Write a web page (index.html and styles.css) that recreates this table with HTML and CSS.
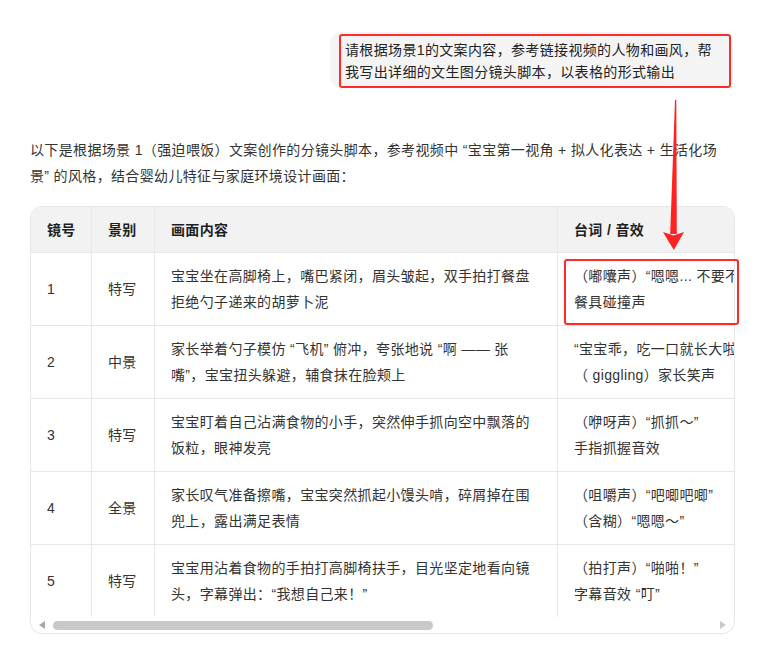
FILE: index.html
```html
<!DOCTYPE html>
<html>

<head>
    <meta charset="UTF-8">
    <meta name="viewport" content="width=device-width, initial-scale=1.0">
    <title>分镜头脚本</title>
    <link rel="stylesheet" href="styles.css">
</head>

<body>
    <div class="chat">
        <div class="question">
            <div class="question-bubble">
                <div class="question-text">请根据场景1的文案内容，参考链接视频的人物和画风，帮我写出详细的文生图分镜头脚本，以表格的形式输出</div>
            </div>
        </div>
        <div class="answer">
            <p class="intro">以下是根据场景 1（强迫喂饭）文案创作的分镜头脚本，参考视频中 “宝宝第一视角 + 拟人化表达 + 生活化场景” 的风格，结合婴幼儿特征与家庭环境设计画面：</p>
            <div class="table-box">
                <div class="table-scroll">
                    <table class="script-table">
                        <thead>
                            <tr>
                                <th class="col-no">镜号</th>
                                <th class="col-shot">景别</th>
                                <th class="col-scene">画面内容</th>
                                <th class="col-sound">台词 / 音效</th>
                            </tr>
                        </thead>
                        <tbody>
                            <tr>
                                <td>1</td>
                                <td>特写</td>
                                <td>宝宝坐在高脚椅上，嘴巴紧闭，眉头皱起，双手拍打餐盘拒绝勺子递来的胡萝卜泥</td>
                                <td>（嘟囔声）“嗯嗯... 不要不要！”<br>餐具碰撞声</td>
                            </tr>
                            <tr>
                                <td>2</td>
                                <td>中景</td>
                                <td>家长举着勺子模仿 “飞机” 俯冲，夸张地说 “啊 —— 张嘴”，宝宝扭头躲避，辅食抹在脸颊上</td>
                                <td>“宝宝乖，吃一口就长大啦～”<br>（ giggling）家长笑声</td>
                            </tr>
                            <tr>
                                <td>3</td>
                                <td>特写</td>
                                <td>宝宝盯着自己沾满食物的小手，突然伸手抓向空中飘落的饭粒，眼神发亮</td>
                                <td>（咿呀声）“抓抓～”<br>手指抓握音效</td>
                            </tr>
                            <tr>
                                <td>4</td>
                                <td>全景</td>
                                <td>家长叹气准备擦嘴，宝宝突然抓起小馒头啃，碎屑掉在围兜上，露出满足表情</td>
                                <td>（咀嚼声）“吧唧吧唧”<br>（含糊）“嗯嗯～”</td>
                            </tr>
                            <tr>
                                <td>5</td>
                                <td>特写</td>
                                <td>宝宝用沾着食物的手拍打高脚椅扶手，目光坚定地看向镜头，字幕弹出：“我想自己来！”</td>
                                <td>（拍打声）“啪啪！”<br>字幕音效 “叮”</td>
                            </tr>
                        </tbody>
                    </table>
                </div>
                <div class="scrollbar">
                    <span class="scroll-left"></span>
                    <div class="scroll-track">
                        <div class="scroll-thumb" style="width: 57.7%"></div>
                    </div>
                    <span class="scroll-right"></span>
                </div>
            </div>
        </div>
    </div>

    <!-- annotations drawn over the screenshot -->
    <div class="mark-box"></div>
    <svg class="mark-arrow" width="28" height="154" viewBox="0 0 28 154">
        <polygon points="15,2 16.3,2 16.8,136 10.2,136" fill="#ff2222" />
        <polygon points="3,134 13.5,137.5 24,134 13.8,152" fill="#ff2222" />
    </svg>
</body>

</html>
```

FILE: styles.css
```css
body {
    margin: 0;
    background-color: #fff;
    color: #333;
    font-family: "Liberation Sans", "Noto Sans CJK SC", sans-serif;
    font-size: 14px;
    letter-spacing: 0.35px;
}

.chat {
    width: 705px;
    padding: 32px 0 0 30px;
}

.question {
    display: flex;
    justify-content: flex-end;
    margin-right: 2px;
}

.question-bubble {
    background-color: #f4f4f4;
    border-radius: 12px;
    padding: 2px 2px 0 9px;
}

.question-text {
    width: 374px;
    padding: 3px 10px 3px 4px;
    border: 2px solid #ff2a2a;
    border-radius: 3px;
    line-height: 22px;
    color: #222;
}

.intro {
    margin: 49px 0 17px;
    line-height: 26px;
}

.table-box {
    border: 1px solid #e6e6e6;
    border-radius: 12px;
    overflow: hidden;
}

.table-scroll {
    overflow: hidden;
}

.script-table {
    border-collapse: separate;
    border-spacing: 0;
    table-layout: fixed;
    width: 867px;
}

.script-table th,
.script-table td {
    box-sizing: border-box;
    padding: 10px 16px;
    line-height: 26px;
    text-align: left;
    vertical-align: middle;
    border-right: 1px solid #e8e8e8;
    border-bottom: 1px solid #e8e8e8;
}

.script-table th {
    padding-bottom: 9px;
    background-color: #f2f2f2;
    color: #1f1f1f;
    font-weight: bold;
    white-space: nowrap;
}

.script-table tbody tr:last-child td {
    border-bottom: none;
}

.col-no {
    width: 61px;
}

.col-shot {
    width: 63px;
}

.col-scene {
    width: 403px;
}

.col-sound {
    width: 340px;
}

.scrollbar {
    display: flex;
    align-items: center;
    gap: 8px;
    height: 16px;
    padding: 0 8px;
}

.scroll-left {
    width: 0;
    height: 0;
    border-top: 4px solid transparent;
    border-bottom: 4px solid transparent;
    border-right: 6px solid #a6a6a6;
}

.scroll-right {
    width: 0;
    height: 0;
    border-top: 4px solid transparent;
    border-bottom: 4px solid transparent;
    border-left: 6px solid #c9c9c9;
}

.scroll-track {
    flex: 1;
    height: 9px;
}

.scroll-thumb {
    height: 9px;
    border-radius: 5px;
    background-color: #c8c8c8;
}

.mark-box {
    position: absolute;
    left: 564px;
    top: 259px;
    width: 171px;
    height: 62px;
    border: 2px solid #ff2a2a;
    border-radius: 3px;
}

.mark-arrow {
    position: absolute;
    left: 660px;
    top: 98px;
}
```
